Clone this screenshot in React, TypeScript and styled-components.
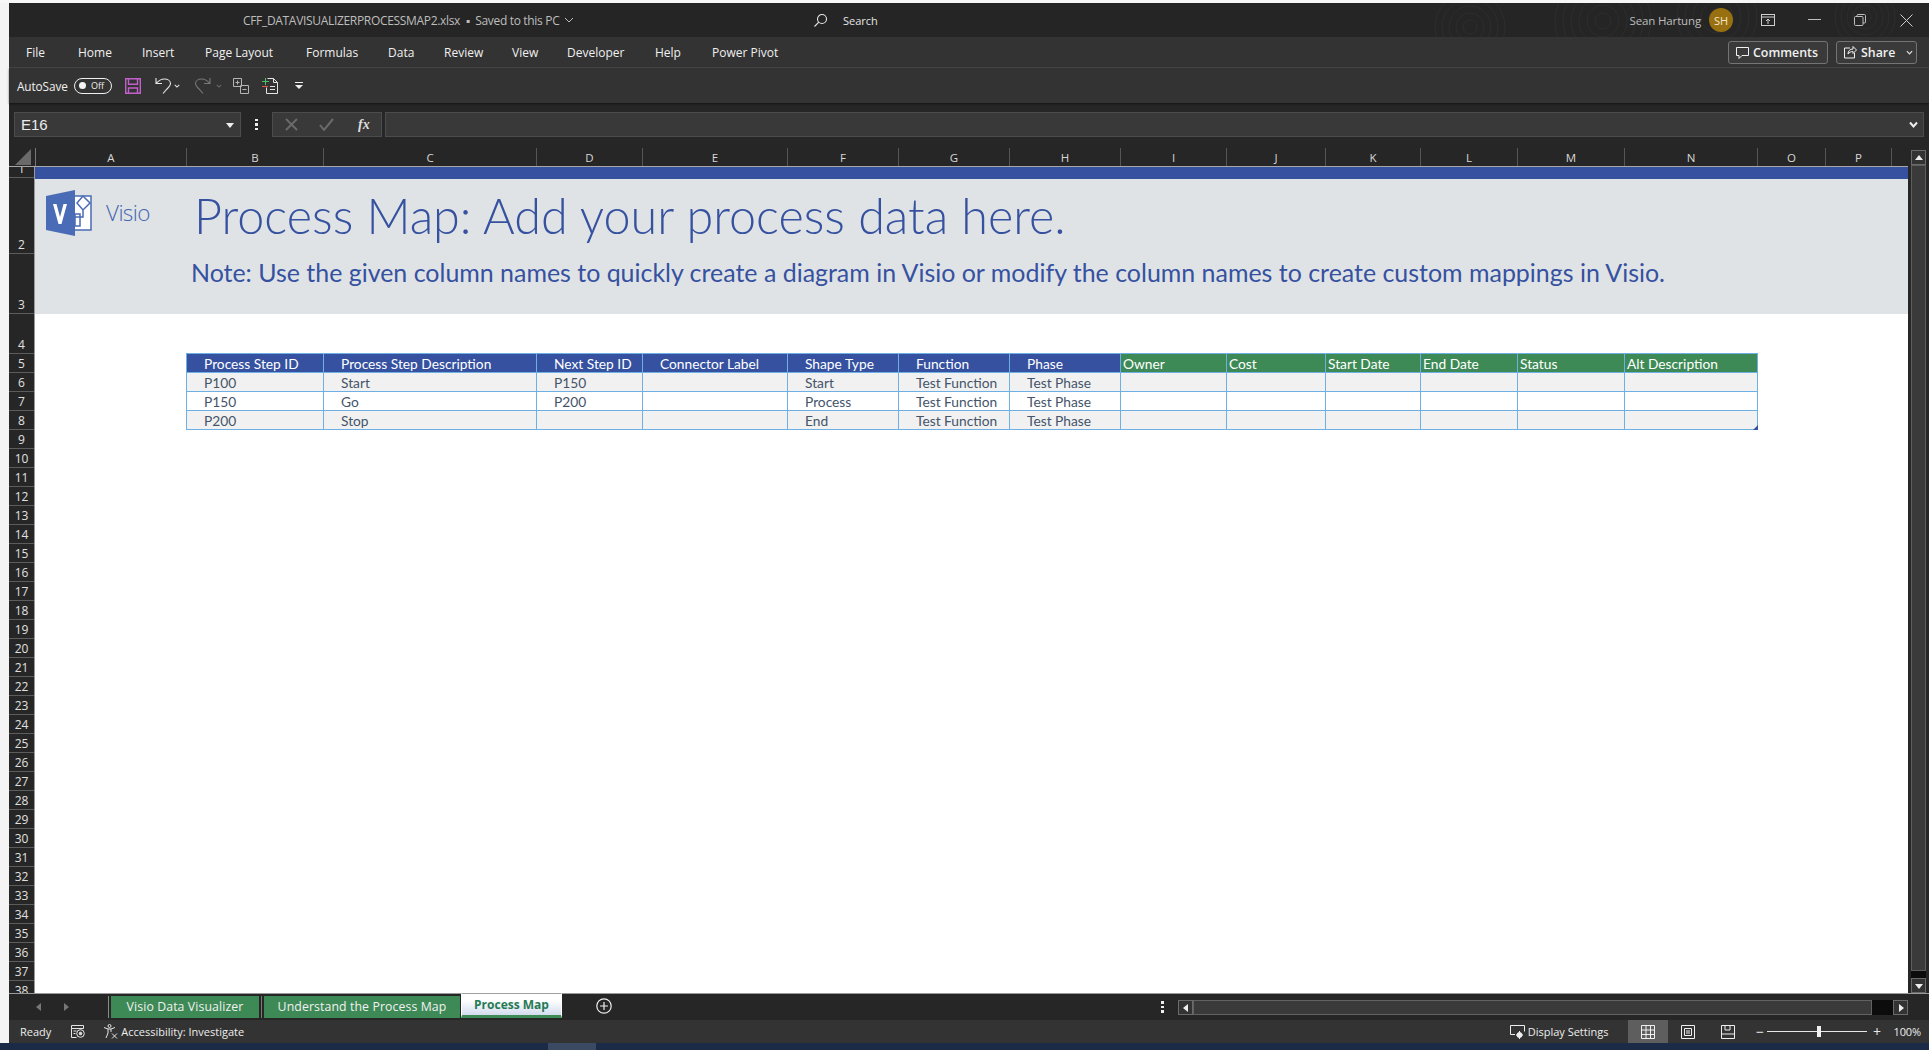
import React from "react";
import styled, { createGlobalStyle } from "styled-components";

const GlobalStyle = createGlobalStyle`
  html, body { margin: 0; padding: 0; background: #f4f4f4; overflow: hidden; }
  * { box-sizing: border-box; }
`;

const UI = `"Open Sans", "Noto Sans", sans-serif`;
const SHEET = `Lato, "Open Sans", sans-serif`;

const Page = styled.div`
  width: 1929px; height: 1050px; display: flex; flex-direction: column;
  background: #f4f4f4; font-family: ${UI}; overflow: hidden;
`;
const Main = styled.div`display: flex; height: 1043px; padding-top: 3px; background: #f7f7f7;`;
const Strip = styled.div`width: 9px; flex: none; background: #f4f4f4;`;
const Win = styled.div`width: 1920px; display: flex; flex-direction: column; background: #262626;`;
const Taskbar = styled.div`height: 7px; display: flex; background: #1a2a47; padding-left: 548px;`;
const TaskItem = styled.div`width: 48px; background: #3c4963;`;

const TitleBar = styled.div`
  position: relative; height: 34px; flex: none; display: grid; grid-template-columns: 795px 1fr auto;
  align-items: center; background: #252525; color: #c8c8c8; overflow: hidden;
`;
const Rings = styled.svg`position: absolute; right: 0; top: 0; pointer-events: none;`;
const DocName = styled.div`
  position: relative; padding-left: 234px; font-size: 12px; letter-spacing: -0.32px; color: #bdbdbd;
  display: flex; align-items: center; gap: 5px; white-space: nowrap;
`;
const Search = styled.div`position: relative; display: flex; align-items: center; gap: 15px; font-size: 11px; color: #e4e4e4; padding-left: 9px;`;
const TitleRight = styled.div`position: relative; display: flex; align-items: center; height: 100%;`;
const UserName = styled.span`font-size: 11.5px; letter-spacing: -0.15px; color: #bdbdbd; margin-right: 8px;`;
const Avatar = styled.div`
  width: 24px; height: 24px; border-radius: 50%; background: #99700f; color: #f4e6c6; font-size: 11px;
  display: flex; align-items: center; justify-content: center; margin-right: 12px;
`;
const WinBtn = styled.div`width: 46px; height: 100%; display: flex; align-items: center; justify-content: center;`;

const RibbonTabs = styled.div`
  height: 31px; flex: none; display: flex; align-items: center; padding-left: 17px; background: #333; color: #f0f0f0;
  font-size: 12px; border-bottom: 1px solid #474747; position: relative;
`;
const RibbonTab = styled.div<{ $w?: number }>`
  flex: none; width: ${p => (p.$w ? `${p.$w}px` : "auto")}; white-space: nowrap;
`;
const RibbonActions = styled.div`margin-left: auto; margin-right: 12px; display: flex; gap: 8px;`;
const ActionBtn = styled.div<{ $w: number }>`
  width: ${p => p.$w}px; height: 23px; border: 1px solid #747474; border-radius: 3px; display: flex; align-items: center;
  padding-left: 7px; gap: 4px; font-weight: 600; font-size: 12.4px; color: #f0f0f0; background: #3a3a3a;
`;

const QuickBar = styled.div`
  height: 35px; flex: none; display: flex; align-items: center; padding-left: 8px; background: #333; color: #f0f0f0;
  box-shadow: 0 1px 2px rgba(0,0,0,.5); position: relative;
`;
const QuickLabel = styled.span`font-size: 11.8px; letter-spacing: -0.1px; width: 57px; white-space: nowrap;`;
const Toggle = styled.div`
  width: 38px; height: 16px; border: 1px solid #f0f0f0; border-radius: 8px; display: flex; align-items: center;
  gap: 5px; padding-left: 4px; font-size: 9px; color: #f0f0f0;
`;
const Knob = styled.span`width: 7px; height: 7px; border-radius: 50%; background: #f4f4f4; flex: none;`;
const Slot = styled.div<{ $ml: number; $w: number }>`
  margin-left: ${p => p.$ml}px; width: ${p => p.$w}px; flex: none; display: flex; align-items: center; justify-content: center;
`;

const FormulaRow = styled.div`height: 45px; flex: none; display: flex; padding: 9px 5px 11px 5px; background: #262626;`;
const FieldBox = styled.div<{ $w?: number }>`
  height: 25px; ${p => (p.$w ? `width: ${p.$w}px; flex: none;` : "flex: 1;")} background: #393939; border: 1px solid #4c4c4c;
  display: flex; align-items: center;
`;
const NameBox = styled(FieldBox)`
  font-family: "Liberation Sans", sans-serif; font-size: 15px; color: #ededed; padding: 0 5px 0 6px; justify-content: space-between;
`;
const Dots = styled.div`width: 31px; flex: none; display: flex; flex-direction: column; align-items: center; justify-content: center; gap: 2px; height: 25px;`;
const Dot = styled.span`width: 2.5px; height: 2.5px; background: #eee;`;
const FxBtns = styled(FieldBox)`margin-right: 3px; padding-left: 12px; gap: 21px;`;
const FxLabel = styled.span`font-family: "Liberation Serif", serif; font-style: italic; font-weight: 700; font-size: 14px; color: #ddd; margin-left: 3px;`;
const FormulaInput = styled(FieldBox)`justify-content: flex-end; padding-right: 5px;`;

const SheetArea = styled.div`flex: 1; display: flex; min-height: 0;`;
const SheetCol = styled.div`width: 1899px; flex: none; display: flex; flex-direction: column;`;
const ColHeads = styled.div`height: 19px; flex: none; display: flex; background: #262626; border-bottom: 1px solid #a8a8a8;`;
const Corner = styled.div`
  width: 27px; flex: none; display: flex; align-items: flex-end; justify-content: flex-end; padding: 0 4px 1px 0;
  border-right: 1px solid #777;
`;
const CornerTri = styled.div`width: 0; height: 0; border-style: solid; border-width: 0 0 16px 16px; border-color: transparent transparent #6a6a6a transparent;`;
const ColHead = styled.div<{ $w: number }>`
  width: ${p => p.$w}px; flex: none; text-align: center; font-size: 11.5px; line-height: 19px; color: #d8d8d8;
  border-right: 1px solid #555;
`;
const SheetBody = styled.div`flex: 1; display: flex; min-height: 0;`;
const RowHeads = styled.div`width: 26px; flex: none; overflow: hidden; background: #262626; border-right: 1px solid #999;`;
const RowHead = styled.div<{ $h: number }>`
  height: ${p => p.$h}px; display: flex; align-items: flex-end; justify-content: center; overflow: hidden;
  font-size: 12px; line-height: 17px; color: #e0e0e0; border-bottom: 1px solid #5c5c5c;
`;
const Grid = styled.div`flex: 1; background: #fff; overflow: hidden; min-width: 0;`;
const BlueBand = styled.div`height: 12px; background: #36519f;`;
const Banner = styled.div`height: 135px; display: flex; padding-left: 11px; background: #dfe3e6; color: #36519f;`;
const LogoMark = styled.svg`flex: none; margin-top: 11px;`;
const LogoText = styled.div`
  width: 102px; flex: none; padding: 18px 0 0 14px; font-family: ${UI}; font-weight: 300; font-size: 22.5px; line-height: 32px;
  letter-spacing: -0.6px; color: #4566b0;
`;
const Headline = styled.div`display: flex; flex-direction: column;`;
const MainTitle = styled.div`
  font-family: ${SHEET}; font-weight: 300; font-size: 48.5px; line-height: 58px; margin-top: 7px; white-space: nowrap; color: #36519f;
`;
const Note = styled.div`
  font-family: ${SHEET}; font-size: 24.95px; line-height: 32px; margin: 12px 0 0 -3px; white-space: nowrap; color: #36519f;
`;
const Table = styled.div`width: 1572px; border-top: 1px solid #6fb0e4; border-left: 1px solid #6fb0e4; position: relative; margin: 39px 0 0 151px;`;
const TRow = styled.div<{ $alt?: boolean }>`display: flex; height: 19px; background: ${p => (p.$alt ? "#f1f1f1" : "#fff")};`;
const Cell = styled.div<{ $w: number; $bg?: string; $head?: boolean; $pad?: number }>`
  width: ${p => p.$w}px; flex: none; height: 19px; padding-left: ${p => p.$pad ?? 17}px; font-family: ${SHEET}; font-size: 13.75px; line-height: 19px;
  white-space: nowrap; overflow: hidden; border-right: 1px solid #6fb0e4; border-bottom: 1px solid #6fb0e4;
  color: ${p => (p.$head ? "#fff" : "#44546a")}; background: ${p => p.$bg ?? "transparent"};
`;
const Handle = styled.div`
  position: absolute; right: 0; bottom: 0; width: 0; height: 0; border-style: solid; border-width: 0 0 5px 5px;
  border-color: transparent transparent #36519f transparent;
`;

const VScroll = styled.div`width: 21px; flex: none; display: flex; flex-direction: column; align-items: center; padding: 2px 0 0 0; background: #262626;`;
const ScrollBtn = styled.div<{ $w?: number }>`
  width: ${p => p.$w ?? 15}px; height: 15px; flex: none; background: #333; border: 1px solid #6a6a6a; display: flex; align-items: center; justify-content: center;
`;
const VThumb = styled.div`width: 15px; height: 806px; flex: none; background: #3a3a3a; border: 1px solid #5e5e5e;`;
const VTrack = styled.div`width: 15px; flex: 1; background: #0c0c0c;`;

const TabBar = styled.div`
  height: 27px; flex: none; display: flex; background: #262626; border-top: 1px solid #9a9a9a; width: 1920px; position: relative;
  padding-right: 21px;
`;
const Nav = styled.div`width: 100px; height: 22px; margin-top: 2px; flex: none; display: flex; border-right: 1px solid #8a8a8a; padding-left: 25px; gap: 17px; align-items: center;`;
const TabSep = styled.div`width: 1px; height: 22px; margin-top: 2px; background: #7a7a7a; flex: none; margin-left: 2px;`;
const SheetTab = styled.div<{ $w: number; $ml?: number }>`
  width: ${p => p.$w}px; margin-left: ${p => p.$ml ?? 0}px; height: 22px; margin-top: 2px; padding-bottom: 2px; flex: none; background: #3e8a56; color: #f1f1f1; font-size: 12.3px;
  display: flex; align-items: center; justify-content: center; white-space: nowrap; letter-spacing: 0.1px;
`;
const ActiveTab = styled.div`
  width: 101px; height: 25px; margin-top: -1px; flex: none; margin-left: 1px; background: linear-gradient(#fff 30%, #d3dcee);
  border: 1px solid #fff; border-bottom: 3px solid #3e8a56; border-top: 1px solid #a0a0a0; color: #267a54; font-size: 12px; font-weight: 700;
  display: flex; align-items: center; justify-content: center; white-space: nowrap;
`;
const AddSheet = styled.div`margin-left: 34px; width: 16px; height: 16px; margin-top: 4px; flex: none; display: flex;`;
const SheetDots = styled(Dots)`margin-left: auto; margin-right: 7px; width: 17px; height: 26px;`;
const HBar = styled.div`width: 730px; height: 15px; margin-top: 6px; flex: none; display: flex;`;
const HThumb = styled.div`flex: 1; background: #3a3a3a; border: 1px solid #626262;`;
const HTrack = styled.div`width: 21px; flex: none; background: #0c0c0c;`;

const StatusBar = styled.div`
  height: 23px; flex: none; display: flex; align-items: center; background: #333; color: #ededed; font-size: 11px; padding-left: 11px;
`;
const StatusText = styled.span<{ $ml?: number }>`margin-left: ${p => p.$ml ?? 0}px; white-space: nowrap;`;
const StatusRight = styled.div`margin-left: auto; height: 100%; display: flex; align-items: center;`;
const ViewBtn = styled.div<{ $on?: boolean }>`
  width: 40px; height: 100%; display: flex; align-items: center; justify-content: center; background: ${p => (p.$on ? "#5e5e5e" : "transparent")};
`;
const ViewSlot = styled.div`margin-left: 20px; width: 40px; height: 100%; flex: none;`;
const ZoomSlider = styled.div`width: 100px; height: 1px; background: #e8e8e8; margin: 0 5px 0 3px; position: relative; flex: none;`;
const ZoomThumb = styled.div`position: absolute; left: 50px; top: -5px; width: 4px; height: 11px; background: #f0f0f0;`;
const ZoomSign = styled.span`font-size: 14px; color: #e8e8e8; line-height: 1; width: 9px; text-align: center;`;
const ZoomPct = styled.span`font-size: 11px; margin: 0 8px 0 12px; letter-spacing: -0.1px;`;

const COLS: [string, number][] = [
  ["A", 151], ["B", 137], ["C", 213], ["D", 106], ["E", 145], ["F", 111], ["G", 111], ["H", 111],
  ["I", 106], ["J", 99], ["K", 95], ["L", 97], ["M", 107], ["N", 133], ["O", 68], ["P", 66],
];
const HEAD_BLUE = ["Process Step ID", "Process Step Description", "Next Step ID", "Connector Label", "Shape Type", "Function", "Phase"];
const HEAD_GREEN = ["Owner", "Cost", "Start Date", "End Date", "Status", "Alt Description"];
const TABLE_W = COLS.slice(1, 14).map(c => c[1]);
const DATA = [
  ["P100", "Start", "P150", "", "Start", "Test Function", "Test Phase"],
  ["P150", "Go", "P200", "", "Process", "Test Function", "Test Phase"],
  ["P200", "Stop", "", "", "End", "Test Function", "Test Phase"],
];
const RIBBON: [string, number?][] = [
  ["File", 52], ["Home", 64], ["Insert", 63], ["Page Layout", 101], ["Formulas", 82], ["Data", 56],
  ["Review", 68], ["View", 55], ["Developer", 88], ["Help", 57], ["Power Pivot"],
];
const ROW_HEIGHTS = [11, 76, 60, 40, ...Array.from({ length: 34 }, () => 19)];

const Chevron = ({ c = "#e0e0e0", s = 7 }: { c?: string; s?: number }) => (
  <svg width={s} height={s} viewBox="0 0 8 8" fill="none"><path d="M1 2.5 4 5.5 7 2.5" stroke={c} strokeWidth="1.4" /></svg>
);
const Tri = ({ dir, c = "#eee" }: { dir: "u" | "d" | "l" | "r"; c?: string }) => {
  const p = { u: "1,7 9,7 5,2", d: "1,3 9,3 5,8", l: "7,1 7,9 2,5", r: "3,1 3,9 8,5" }[dir];
  return <svg width="10" height="10" viewBox="0 0 10 10"><polygon points={p} fill={c} /></svg>;
};

export default function App() {
  return (
    <Page>
      <GlobalStyle />
      <Main>
        <Strip />
        <Win>
          <TitleBar>
            <Rings width="520" height="34" viewBox="0 0 520 34" fill="none" stroke="#2d2d2d">
              {[7, 14, 21, 28, 35].map(r => <circle key={r} cx="61" cy="24" r={r} />)}
              {[8, 16, 24, 32, 40, 48].map(r => <circle key={r} cx="194" cy="18" r={r} />)}
              {[8, 16, 24, 32, 40].map(r => <circle key={r} cx="308" cy="14" r={r} />)}
              {[6, 12, 18, 24, 30].map(r => <circle key={r} cx="456" cy="14" r={r} />)}
            </Rings>
            <DocName>
              CFF_DATAVISUALIZERPROCESSMAP2.xlsx &nbsp;▪&nbsp; Saved to this PC
              <svg width="10" height="10" viewBox="0 0 10 10" fill="none"><path d="M1 3 5 7 9 3" stroke="#bdbdbd" /></svg>
            </DocName>
            <Search>
              <svg width="15" height="15" viewBox="0 0 15 15" fill="none" stroke="#e8e8e8" strokeWidth="1.1">
                <circle cx="9" cy="6" r="4.5" /><path d="M5.8 9.2 1.5 13.5" />
              </svg>
              Search
            </Search>
            <TitleRight>
              <UserName>Sean Hartung</UserName>
              <Avatar>SH</Avatar>
              <WinBtn>
                <svg width="14" height="12" viewBox="0 0 14 12" fill="none" stroke="#cfcfcf"><rect x=".5" y=".5" width="13" height="11" /><path d="M.5 3H13.5M7 10V5M5 7l2-2 2 2" /></svg>
              </WinBtn>
              <WinBtn><svg width="13" height="2" viewBox="0 0 13 2"><path d="M0 .5h13" stroke="#bdbdbd" /></svg></WinBtn>
              <WinBtn>
                <svg width="12" height="12" viewBox="0 0 12 12" fill="none" stroke="#bdbdbd"><rect x=".5" y="2.5" width="8.5" height="9" rx="1" /><path d="M3 2.5V1.5a1 1 0 0 1 1-1h6.5a1 1 0 0 1 1 1V8a1 1 0 0 1-1 1H9" /></svg>
              </WinBtn>
              <WinBtn><svg width="13" height="13" viewBox="0 0 13 13"><path d="M.5.5l12 12M12.5.5l-12 12" stroke="#cfcfcf" /></svg></WinBtn>
            </TitleRight>
          </TitleBar>

          <RibbonTabs>
            {RIBBON.map(([t, w]) => <RibbonTab key={t} $w={w}>{t}</RibbonTab>)}
            <RibbonActions>
              <ActionBtn $w={100}>
                <svg width="13" height="13" viewBox="0 0 13 13" fill="none" stroke="#f0f0f0"><path d="M.5 1.5h12v8H6l-3 3v-3H.5z" /></svg>
                Comments
              </ActionBtn>
              <ActionBtn $w={81}>
                <svg width="13" height="14" viewBox="0 0 13 14" fill="none" stroke="#f0f0f0"><path d="M6 3H.5v10h10V8M4 9c0-3 2-5 5-5V1.5L12.5 5 9 8.5V6.5C7 6.5 5 7.5 4 9z" /></svg>
                Share
                <Slot $ml={5} $w={10}><Chevron /></Slot>
              </ActionBtn>
            </RibbonActions>
          </RibbonTabs>

          <QuickBar>
            <QuickLabel>AutoSave</QuickLabel>
            <Toggle><Knob />Off</Toggle>
            <Slot $ml={13} $w={16}>
              <svg width="16" height="16" viewBox="0 0 16 16" fill="none" stroke="#c35fcb" strokeWidth="1.4"><path d="M.7.7h14.6v14.6H.7zM3.5.7v5.6h9V.7M3.5 15.3V10h9v5.3" /></svg>
            </Slot>
            <Slot $ml={14} $w={17}>
              <svg width="17" height="17" viewBox="0 0 17 17" fill="none" stroke="#e6e6e6" strokeWidth="1.1"><path d="M1 1v5.5h6M1 6.5C4 3 6.5 2 9.5 2c3.5 0 6 2 6 4.5 0 2-1.5 3.5-3.5 5.5l-4 4.5" /></svg>
            </Slot>
            <Slot $ml={1} $w={8}><Chevron s={6} /></Slot>
            <Slot $ml={13} $w={17}>
              <svg width="17" height="17" viewBox="0 0 17 17" fill="none" stroke="#787878" strokeWidth="1.1"><path d="M16 1v5.5h-6M16 6.5C13 3 10.5 2 7.5 2 4 2 1.5 4 1.5 6.5c0 2 1.5 3.5 3.5 5.5l4 4.5" /></svg>
            </Slot>
            <Slot $ml={4} $w={8}><Chevron s={6} c="#6a6a6a" /></Slot>
            <Slot $ml={10} $w={16}>
              <svg width="16" height="16" viewBox="0 0 16 16" fill="none" stroke="#b5b5b5"><path d="M.5.5h8v8h-8zM2.5 4.5h4M4.5 2.5v4M7.5 7.5h8v8h-8zM9.5 11.5h4" /></svg>
            </Slot>
            <Slot $ml={13} $w={16}>
              <svg width="16" height="17" viewBox="0 0 16 17" fill="none" stroke="#e4e4e4"><path d="M5.5 1.5h6l4 4v11h-11v-6M11.5 1.5v4h4M8 9.5h5M8 12.5h5" /><path d="M0 4.5h7M3.5 1v7" stroke="#45c46a" /><path d="M0 9.5h6" stroke="#e2574c" /></svg>
            </Slot>
            <Slot $ml={16} $w={10}>
              <svg width="8" height="8" viewBox="0 0 8 8"><path d="M0 .5h8" stroke="#eee" /><polygon points="0,3 8,3 4,7" fill="#eee" /></svg>
            </Slot>
          </QuickBar>

          <FormulaRow>
            <NameBox $w={227}>E16<Tri dir="d" /></NameBox>
            <Dots><Dot /><Dot /><Dot /></Dots>
            <FxBtns $w={110}>
              <svg width="13" height="13" viewBox="0 0 13 13"><path d="M1 1l11 11M12 1 1 12" stroke="#6a6a6a" strokeWidth="2" /></svg>
              <svg width="15" height="13" viewBox="0 0 15 13" fill="none"><path d="M1 7l4 5L14 1" stroke="#6a6a6a" strokeWidth="2" /></svg>
              <FxLabel>fx</FxLabel>
            </FxBtns>
            <FormulaInput>
              <svg width="9" height="8" viewBox="0 0 9 8" fill="none"><path d="M1 1.5 4.5 5.5 8 1.5" stroke="#eee" strokeWidth="2" /></svg>
            </FormulaInput>
          </FormulaRow>

          <SheetArea>
            <SheetCol>
              <ColHeads>
                <Corner><CornerTri /></Corner>
                {COLS.map(([c, w]) => <ColHead key={c} $w={w}>{c}</ColHead>)}
              </ColHeads>
              <SheetBody>
                <RowHeads>
                  {ROW_HEIGHTS.map((h, i) => <RowHead key={i} $h={h}>{i + 1}</RowHead>)}
                </RowHeads>
                <Grid>
                  <BlueBand />
                  <Banner>
                    <LogoMark width="46" height="46" viewBox="0 0 46 46">
                      <path d="M15 6h30v34H15z" fill="#fff" stroke="#4a6bb5" strokeWidth="1.5" />
                      <path d="M0 6 29 0v46L0 40z" fill="#4a6bb5" />
                      <path d="M31 13 37 6l7 7-7 7zM37 20v7H29M29 24h5v12h-5z" fill="none" stroke="#4a6bb5" strokeWidth="1.5" />
                      <path d="M7 14h3.5l3.500 13 3.500-13H21l-5.500 20h-3z" fill="#fff" />
                    </LogoMark>
                    <LogoText>Visio</LogoText>
                    <Headline>
                      <MainTitle>Process Map: Add your process data here.</MainTitle>
                      <Note>Note: Use the given column names to quickly create a diagram in Visio or modify the column names to create custom mappings in Visio.</Note>
                    </Headline>
                  </Banner>
                  <Table>
                    <TRow>
                      {HEAD_BLUE.map((t, i) => <Cell key={t} $w={TABLE_W[i]} $bg="#36519f" $head>{t}</Cell>)}
                      {HEAD_GREEN.map((t, i) => <Cell key={t} $w={TABLE_W[i + 7]} $bg="#3e8a56" $head $pad={2}>{t}</Cell>)}
                    </TRow>
                    {DATA.map((row, r) => (
                      <TRow key={r} $alt={r % 2 === 0}>
                        {TABLE_W.map((w, c) => <Cell key={c} $w={w}>{row[c] ?? ""}</Cell>)}
                      </TRow>
                    ))}
                    <Handle />
                  </Table>
                </Grid>
              </SheetBody>
            </SheetCol>
            <VScroll>
              <ScrollBtn><Tri dir="u" /></ScrollBtn>
              <VThumb />
              <VTrack />
              <ScrollBtn><Tri dir="d" /></ScrollBtn>
            </VScroll>
          </SheetArea>

          <TabBar>
            <Nav><Tri dir="l" c="#777" /><Tri dir="r" c="#777" /></Nav>
            <SheetTab $w={148} $ml={2}>Visio Data Visualizer</SheetTab>
            <TabSep />
            <SheetTab $w={196} $ml={2}>Understand the Process Map</SheetTab>
            <ActiveTab>Process Map</ActiveTab>
            <AddSheet>
              <svg width="16" height="16" viewBox="0 0 16 16" fill="none" stroke="#eee" strokeWidth="1.2"><circle cx="8" cy="8" r="7.2" /><path d="M8 4v8M4 8h8" /></svg>
            </AddSheet>
            <SheetDots><Dot /><Dot /><Dot /></SheetDots>
            <HBar>
              <ScrollBtn><Tri dir="l" /></ScrollBtn>
              <HThumb />
              <HTrack />
              <ScrollBtn><Tri dir="r" /></ScrollBtn>
            </HBar>
          </TabBar>

          <StatusBar>
            <StatusText>Ready</StatusText>
            <Slot $ml={20} $w={14}>
              <svg width="14" height="13" viewBox="0 0 14 13" fill="none" stroke="#e6e6e6"><path d="M.5.5h12v3H.5zM.5 3.5v9h5M2.5 6h3M2.5 8.5h2" /><circle cx="9.5" cy="8.5" r="3.8" /><circle cx="9.5" cy="8.500" r="1.3" fill="#e6e6e6" /></svg>
            </Slot>
            <Slot $ml={18} $w={15}>
              <svg width="15" height="15" viewBox="0 0 15 15" fill="none" stroke="#e6e6e6"><circle cx="6.5" cy="2" r="1.5" /><path d="M1 3.5 5 5h3l4-1.5M5 5v4L3 14M8 5v3M9 9.5l5 5M14 9.5l-5 5" /></svg>
            </Slot>
            <StatusText $ml={3}>Accessibility: Investigate</StatusText>
            <StatusRight>
              <svg width="15" height="14" viewBox="0 0 15 14" fill="none" stroke="#eee"><path d="M5 9.5H.5v-9h14v6" /><circle cx="9.5" cy="10" r="2.5" fill="#eee" /><path d="M9.5 6v8M6 10h7" /></svg>
              <StatusText $ml={3}>Display Settings</StatusText>
              <ViewSlot>
                <ViewBtn $on>
                  <svg width="14" height="14" viewBox="0 0 14 14" fill="none" stroke="#f0f0f0"><path d="M.5.5h13v13H.5zM.5 5h13M.5 9.5h13M5 .5v13M9.5 .5v13" /></svg>
                </ViewBtn>
              </ViewSlot>
              <ViewBtn>
                <svg width="14" height="14" viewBox="0 0 14 14" fill="none" stroke="#f0f0f0"><path d="M.5.5h13v13H.5zM3.5 3.5h7v7h-7zM5 6h4M5 8h4" /></svg>
              </ViewBtn>
              <ViewBtn>
                <svg width="14" height="14" viewBox="0 0 14 14" fill="none" stroke="#f0f0f0"><path d="M.5.5h13v13H.5zM.5 9h13M4 .5v4.500h5V.5" /></svg>
              </ViewBtn>
              <Slot $ml={7} $w={9}><ZoomSign>−</ZoomSign></Slot>
              <ZoomSlider><ZoomThumb /></ZoomSlider>
              <ZoomSign>+</ZoomSign>
              <ZoomPct>100%</ZoomPct>
            </StatusRight>
          </StatusBar>
        </Win>
      </Main>
      <Taskbar><TaskItem /></Taskbar>
    </Page>
  );
}
